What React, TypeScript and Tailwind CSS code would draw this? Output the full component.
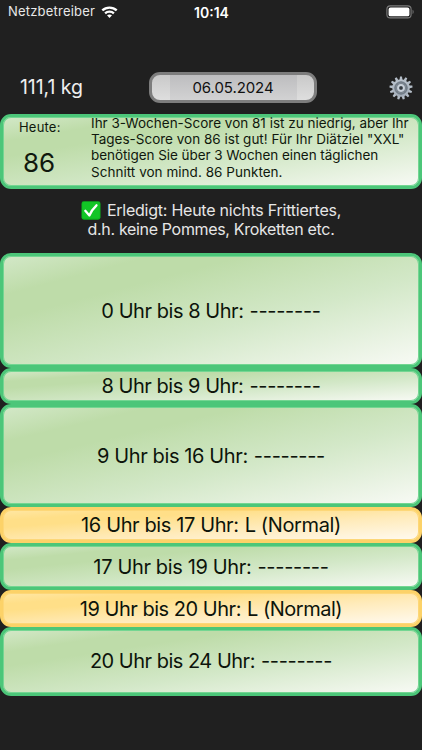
import { clsx } from "clsx";

type Slot = {
  label: string;
  value: string;
  height: string;
  tracking: string;
  warning?: boolean;
};

const EMPTY = "--------";

const slots: Slot[] = [
  { label: "0 Uhr bis 8 Uhr:", value: EMPTY, height: "h-[114.5px] pt-px", tracking: "tracking-[-0.45px]" },
  { label: "8 Uhr bis 9 Uhr:", value: EMPTY, height: "h-[36px] pt-px", tracking: "tracking-[-0.45px]" },
  { label: "9 Uhr bis 16 Uhr:", value: EMPTY, height: "h-[103px] pt-px", tracking: "tracking-[-0.38px]" },
  { label: "16 Uhr bis 17 Uhr:", value: "L (Normal)", height: "h-[36.5px] pt-px", tracking: "tracking-[-0.38px]", warning: true },
  { label: "17 Uhr bis 19 Uhr:", value: EMPTY, height: "h-[47px] pt-px", tracking: "tracking-[-0.35px]" },
  { label: "19 Uhr bis 20 Uhr:", value: "L (Normal)", height: "h-[36.5px] pt-px", tracking: "tracking-[-0.48px]", warning: true },
  { label: "20 Uhr bis 24 Uhr:", value: EMPTY, height: "h-[69px]", tracking: "tracking-[-0.5px]" },
];

const greenPanel =
  "border-[#4cc679] shadow-[inset_0_0_0_1px_#74d692] bg-[linear-gradient(to_bottom_right,#d3e8c8_0%,#bedca9_18%,#bedca9_29%,#d3e8c8_60%,#f8faf5_100%)]";
const yellowPanel =
  "border-[#fcd268] shadow-[inset_0_0_0_1px_#fdd778] bg-[linear-gradient(to_bottom_right,#ffe7a4_0%,#ffdf88_18%,#ffdf88_29%,#ffebbb_60%,#fffaf0_100%)]";

const WifiIcon = () => (
  <svg width="17" height="13" viewBox="0 0 17 13" fill="white">
    <path d="M8.500 0.400c3.100 0 5.900 1.200 8 3.200l-1.600 1.700a9.200 9.200 0 0 0-12.800 0L0.500 3.600c2.100-2 4.900-3.200 8-3.200z" />
    <path d="M8.500 4.400c2 0 3.800.8 5.200 2.100l-1.600 1.700a5.200 5.200 0 0 0-7.200 0L3.300 6.500c1.400-1.300 3.200-2.100 5.200-2.100z" />
    <path d="M8.500 8.400c.9 0 1.800.4 2.500.9l-2.500 2.800L6 9.300c.7-.5 1.600-.9 2.500-.9z" />
  </svg>
);

const BatteryIcon = () => (
  <svg width="29" height="14" viewBox="0 0 29 14">
    <rect x="0.900" y="0.900" width="24.200" height="12" rx="3.400" fill="none" stroke="#7c7c7c" strokeWidth="1.100" />
    <rect x="2.600" y="2.500" width="20.800" height="8.800" rx="1.900" fill="white" />
    <path d="M26.600 4.800c1.300.4 1.300 3.800 0 4.200z" fill="#7c7c7c" />
  </svg>
);

const GearIcon = () => (
  <svg width="24" height="24" viewBox="-12 -12 24 24">
    <defs>
      <linearGradient id="gear" x1="0" y1="0" x2="0" y2="1">
        <stop offset="0" stopColor="#b9c2cc" />
        <stop offset="1" stopColor="#a3adb9" />
      </linearGradient>
    </defs>
    {Array.from({ length: 13 }, (_, i) => (
      <path key={i} d="M-1.500 -8L-1 -11.500H1L1.500 -8z" fill="#b4bdc8" transform={`rotate(${(i * 360) / 13})`} />
    ))}
    <circle r="8.700" fill="url(#gear)" />
    <circle r="6.200" fill="#7f8994" stroke="#626d78" strokeWidth="0.900" />
    <path d="M0 -6V6M-6 0H6M-4.200 -4.200L4.200 4.200M4.200 -4.200L-4.200 4.200" stroke="#737d88" strokeWidth="0.800" />
    <circle r="3" fill="#59636e" stroke="#c9d1da" strokeWidth="1.900" />
    <circle r="1.400" fill="#35393e" />
  </svg>
);

const CheckIcon = () => (
  <svg width="20" height="19" viewBox="0 0 20 19">
    <rect x="0.500" y="0.300" width="19" height="18.400" rx="2.400" fill="#0ab51c" />
    <rect x="1.200" y="0.900" width="17.600" height="16.600" rx="2" fill="#12c526" />
    <path d="M4.300 9.800L8.400 14.500Q10.500 9 15.500 4.300" fill="none" stroke="white" strokeWidth="2.300" strokeLinecap="round" strokeLinejoin="round" />
  </svg>
);

const StatusBar = () => (
  <div className="flex h-6 w-full items-center pl-2 pr-[7px] text-white">
    <div className="flex flex-1 items-center gap-[6px]">
      <span className="text-[13px] tracking-[0.2px] text-[#e8e8e8]">Netzbetreiber</span>
      <WifiIcon />
    </div>
    <span className="text-[14px] font-semibold">10:14</span>
    <div className="flex flex-1 justify-end">
      <BatteryIcon />
    </div>
  </div>
);

const Header = () => (
  <div className="mt-[48px] flex h-[31px] items-center pl-5 pr-[9px]">
    <span className="w-[129px] pt-px text-[19.500px] tracking-[-0.06px] text-[#eeeeee]">111,1 kg</span>
    <button className="flex h-[31px] w-[168px] items-stretch justify-center rounded-[11px] border-[3px] border-[#7d7d7d] bg-gradient-to-b from-[#c9c9c9] to-[#dedede]">
      <span className="flex w-[127px] items-center justify-center bg-gradient-to-b from-[#bdbdbf] to-[#d2d2d3] pt-px text-[15px] tracking-[-0.08px] text-[#111111]">
        06.05.2024
      </span>
    </button>
    <div className="flex flex-1 justify-end">
      <GearIcon />
    </div>
  </div>
);

const ScoreCard = () => (
  <div className={clsx("mt-[11px] flex h-[75px] rounded-[11px] border-[3px] pl-px pt-px text-[#10180d]", greenPanel)}>
    <div className="flex w-[87px] flex-col pl-[15px]">
      <span className="mt-px text-[13px] leading-[16px] tracking-[0.2px]">Heute:</span>
      <span className="mt-[12px] pl-[4px] text-[26px] leading-[32px]">86</span>
    </div>
    <div className="-mt-[3px] whitespace-nowrap text-[13.500px] leading-[16.200px]">
      <p>Ihr 3-Wochen-Score von 81 ist zu niedrig, aber Ihr</p>
      <p>Tages-Score von 86 ist gut! Für Ihr Diätziel "XXL"</p>
      <p className="tracking-[-0.06px]">benötigen Sie über 3 Wochen einen täglichen</p>
      <p className="tracking-[0.03px]">Schnitt von mind. 86 Punkten.</p>
    </div>
  </div>
);

const DailyTask = () => (
  <div className="flex h-[64px] flex-col items-center pt-[12px] text-[16px] leading-[19px] text-[#e6e6e6]">
    <div className="flex items-center gap-[6px]">
      <CheckIcon />
      <span className="tracking-[-0.24px]">Erledigt: Heute nichts Frittiertes,</span>
    </div>
    <span className="tracking-[-0.33px]">d.h. keine Pommes, Kroketten etc.</span>
  </div>
);

const TimeSlot = ({ slot }: { slot: Slot }) => (
  <div
    className={clsx(
      "flex items-center justify-center gap-[6px] whitespace-nowrap rounded-[11px] border-[3px] text-[20px] leading-6 text-[#0d140b]",
      slot.height,
      slot.tracking,
      slot.warning ? yellowPanel : greenPanel
    )}
  >
    <span>{slot.label}</span>
    <span className={slot.value === EMPTY ? "tracking-[-0.3px]" : ""}>{slot.value}</span>
  </div>
);

const App = () => {
  return (
    <div className="h-[750px] w-[422px] overflow-hidden bg-[#202020] font-['Inter','Liberation_Sans',sans-serif]">
      <StatusBar />
      <Header />
      <ScoreCard />
      <DailyTask />
      <div className="flex flex-col">
        {slots.map((slot) => (
          <TimeSlot key={slot.label} slot={slot} />
        ))}
      </div>
    </div>
  );
};

export default App;
